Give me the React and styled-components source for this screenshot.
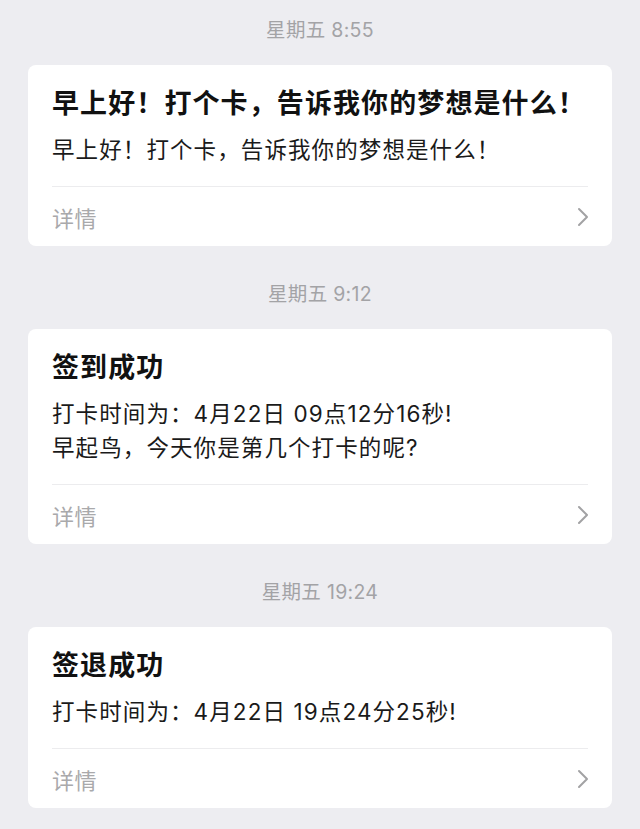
import React from "react";
import styled, { createGlobalStyle } from "styled-components";

const Global = createGlobalStyle`
  html, body {
    margin: 0;
    padding: 0;
    background: #ededf1;
  }
  body {
    font-family: "Inter", "Noto Sans CJK SC", "Noto Sans", sans-serif;
    -webkit-font-smoothing: antialiased;
  }
`;

const Page = styled.div`
  display: flex;
  flex-direction: column;
  gap: 36px;
  padding: 18px 28px 20px;
  min-height: 829px;
  box-sizing: border-box;
  background: #ededf1;
`;

const Group = styled.section`
  display: flex;
  flex-direction: column;
  gap: 23px;
`;

const Stamp = styled.div`
  text-align: center;
  font-size: 19.5px;
  line-height: 24px;
  color: #a3a3a6;
  letter-spacing: 0.3px;
`;

const Card = styled.div`
  background: #ffffff;
  border-radius: 8px;
  padding: 22px 24px 0;
  display: flex;
  flex-direction: column;
`;

const Title = styled.div`
  font-size: 27px;
  line-height: 34px;
  font-weight: 700;
  color: #111111;
  letter-spacing: 1.1px;
`;

const Body = styled.div`
  margin-top: 12px;
  font-size: 22.5px;
  line-height: 34px;
  color: #1a1a1a;
  letter-spacing: 1.1px;
`;

const Divider = styled.div`
  margin-top: 19px;
  height: 1px;
  background: #ececee;
`;

const Footer = styled.div`
  height: 59px;
  display: flex;
  align-items: center;
  justify-content: space-between;
  font-size: 22px;
  color: #a9a9ab;
  letter-spacing: 0.4px;
`;

const Chevron = styled.svg`
  width: 12px;
  height: 20px;
  margin-right: -1px;
  display: block;
`;

const items = [
  {
    time: "星期五 8:55",
    title: "早上好！打个卡，告诉我你的梦想是什么！",
    lines: ["早上好！打个卡，告诉我你的梦想是什么！"],
  },
  {
    time: "星期五 9:12",
    title: "签到成功",
    lines: ["打卡时间为：4月22日 09点12分16秒!", "早起鸟，今天你是第几个打卡的呢?"],
  },
  {
    time: "星期五 19:24",
    title: "签退成功",
    lines: ["打卡时间为：4月22日 19点24分25秒!"],
  },
];

export default function App() {
  return (
    <>
      <Global />
      <Page>
        {items.map((it) => (
          <Group key={it.time}>
            <Stamp>{it.time}</Stamp>
            <Card>
              <Title>{it.title}</Title>
              <Body>
                {it.lines.map((l) => (
                  <div key={l}>{l}</div>
                ))}
              </Body>
              <Divider />
              <Footer>
                <span>详情</span>
                <Chevron viewBox="0 0 12 20">
                  <path
                    d="M2 2 L10 10 L2 18"
                    fill="none"
                    stroke="#a2a2a4"
                    strokeWidth="2"
                    strokeLinecap="round"
                    strokeLinejoin="round"
                  />
                </Chevron>
              </Footer>
            </Card>
          </Group>
        ))}
      </Page>
    </>
  );
}
